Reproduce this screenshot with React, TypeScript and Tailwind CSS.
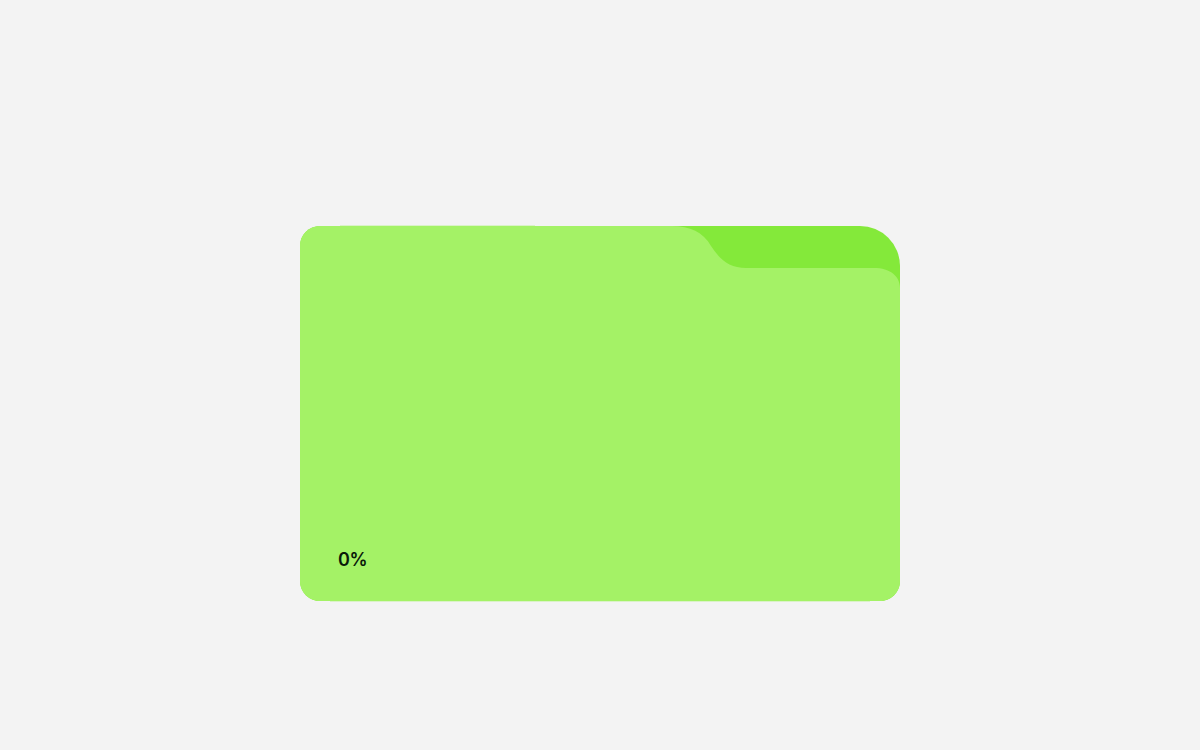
import React from 'react';

const App: React.FC = () => {
  return (
    <div className="min-h-screen bg-[#f3f3f3] flex justify-center pt-[226px]">
      <div className="relative w-[600px] h-[375px] rounded-[20px] rounded-tr-[40px] bg-[#84e93a]">
        <svg width="600" height="375" viewBox="0 0 600 375" className="block">
          <path
            d="M0 20C0 9 9 0 20 0H372C390 0 403 6 411 20C420 34 430 42 446 42H574C590 42 600 50 600 62V355C600 366 591 375 580 375H20C9 375 0 366 0 355Z"
            fill="#a4f266"
          />
        </svg>
        {/* faint soft edges above and below the front sheet */}
        <div className="absolute -top-px left-[40px] w-[195px] h-px bg-[#a4f266]/30" />
        <div className="absolute -bottom-px left-[30px] right-[30px] h-px bg-[#a4f266]/30" />
        <span className="absolute left-[38px] bottom-[26px] font-['Inter',sans-serif] text-lg leading-[30px] font-semibold tracking-[-0.02em] text-[#0a1a0a]">
          0%
        </span>
      </div>
    </div>
  );
};

export default App;
